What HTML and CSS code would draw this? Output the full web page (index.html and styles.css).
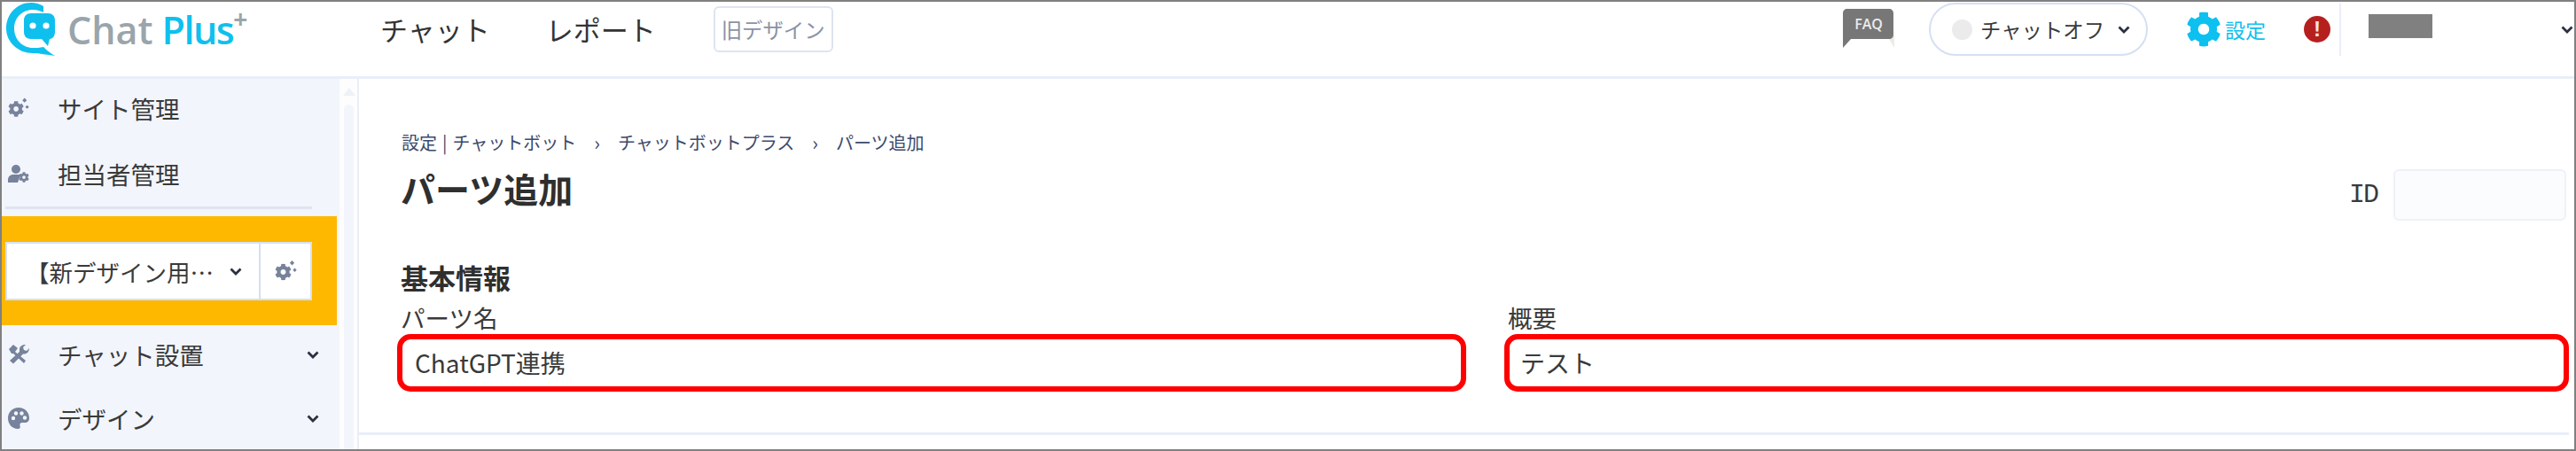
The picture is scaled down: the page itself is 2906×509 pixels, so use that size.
FILE: index.html
```html
<!DOCTYPE html>
<html lang="ja">
<head>
  <meta charset="UTF-8">
  <title>パーツ追加</title>
  <link rel="stylesheet" href="styles.css">
</head>
<body>
<svg class="defs" aria-hidden="true">
  <symbol id="cog" viewBox="0 0 512 512">
    <path d="M487.4 315.7l-42.6-24.6c4.3-23.2 4.3-47 0-70.2l42.6-24.6c4.9-2.8 7.1-8.6 5.5-14-11.1-35.6-30-67.8-54.7-94.6-3.8-4.1-10-5.1-14.8-2.3L380.8 110c-17.9-15.4-38.5-27.3-60.8-35.1V25.8c0-5.6-3.9-10.5-9.4-11.7-36.7-8.2-74.3-7.8-109.2 0-5.5 1.2-9.4 6.1-9.4 11.7V75c-22.2 7.9-42.8 19.8-60.8 35.1L88.7 85.5c-4.9-2.8-11-1.9-14.8 2.3-24.7 26.7-43.6 58.9-54.7 94.6-1.7 5.4.6 11.2 5.5 14L67.3 221c-4.3 23.2-4.3 47 0 70.2l-42.6 24.6c-4.9 2.8-7.1 8.6-5.5 14 11.1 35.6 30 67.8 54.7 94.6 3.8 4.1 10 5.1 14.8 2.3l42.6-24.6c17.9 15.4 38.5 27.3 60.8 35.1v49.2c0 5.6 3.9 10.5 9.4 11.7 36.7 8.2 74.3 7.8 109.2 0 5.5-1.2 9.4-6.1 9.4-11.7v-49.2c22.2-7.9 42.8-19.8 60.8-35.1l42.6 24.6c4.9 2.8 11 1.9 14.8-2.3 24.7-26.7 43.6-58.9 54.7-94.6 1.5-5.5-.7-11.3-5.6-14.1zM256 336c-44.1 0-80-35.9-80-80s35.9-80 80-80 80 35.9 80 80-35.9 80-80 80z"/>
  </symbol>
  <symbol id="sparkle-cog" viewBox="0 0 25 24">
    <use href="#cog" x="0" y="3.5" width="19" height="19"/>
    <path d="M19.5 0l2.6 2.8-2.6 2.8-2.6-2.8zM22.5 8.5l2.2 2.2-2.2 2.2-2.2-2.2z"/>
  </symbol>
  <symbol id="chev" viewBox="0 0 14 9">
    <path d="M1.5 1.5L7 7l5.5-5.5" fill="none" stroke="currentColor" stroke-width="2.8"/>
  </symbol>
</svg>

<div class="frame">
  <header class="topbar">
    <a class="logo">
      <svg class="logo-mark" viewBox="0 0 56 60">
        <path fill="#0fc0ee" d="M42 4A28 28 0 0 0 28 0C12 0 0 13 0 29C0 45 14 57 30 57C38 57 46 59 55 60C48 56 44 52 42 50C38 51 34 51 30 51C18 51 9 41 9 29C9 17 18 8 30 8C34 8 38 9 42 11Z"/>
        <path fill="#0fc0ee" d="M28 12H47C52 12 55 15 55 20V33C55 38 52 41 49 41L47 49L40 41H28C23 41 20 38 20 33V20C20 15 23 12 28 12Z"/>
        <circle cx="30" cy="26" r="3.6" fill="#fff"/>
        <circle cx="45" cy="26" r="3.6" fill="#fff"/>
      </svg>
      <span class="logo-chat">Chat</span>
      <span class="logo-plus">Plus</span>
      <span class="logo-sup">+</span>
    </a>
    <nav class="topnav">
      <a>チャット</a>
      <a>レポート</a>
    </nav>
    <a class="old-design">旧デザイン</a>

    <div class="top-right">
      <svg class="faq" viewBox="0 0 58 44">
        <path fill="#ecece6" d="M6 30H58V44L52 34H6Z"/>
        <path fill="#777" d="M5 0H52C55 0 57 2 57 5V29C57 32 55 34 52 34H9L0 44V5C0 2 2 0 5 0Z"/>
        <text x="29" y="23" text-anchor="middle" class="faq-text">FAQ</text>
      </svg>
      <div class="chat-toggle">
        <span class="dot"></span>
        <span class="toggle-label">チャットオフ</span>
        <svg class="chev"><use href="#chev"/></svg>
      </div>
      <a class="settings">
        <svg class="settings-cog"><use href="#cog"/></svg>
        <span>設定</span>
      </a>
      <span class="alert">!</span>
      <div class="user">
        <span class="user-name"></span>
        <svg class="chev"><use href="#chev"/></svg>
      </div>
    </div>
  </header>

  <div class="body">
    <aside class="sidebar">
      <a class="side-item">
        <svg class="side-icon"><use href="#sparkle-cog"/></svg>
        <span>サイト管理</span>
      </a>
      <a class="side-item second">
        <svg class="side-icon" viewBox="0 0 24 20">
          <circle cx="9" cy="5" r="5"/>
          <path d="M0 20V17C0 13 3 11 6 11H12C13 11 14 11.5 14 12L11 20Z"/>
          <use href="#cog" x="12" y="8" width="12" height="12"/>
        </svg>
        <span>担当者管理</span>
      </a>
      <hr class="side-rule">
      <div class="site-pick">
        <div class="site-select">
          <span class="site-name">【新デザイン用…</span>
          <svg class="chev"><use href="#chev"/></svg>
          <span class="site-cog"><svg><use href="#sparkle-cog"/></svg></span>
        </div>
      </div>
      <a class="side-item">
        <svg class="side-icon" viewBox="0 0 24 22">
          <path d="M1 5L6 0L11 4L8 8L20 18L18 21L6 10L4 10Z"/>
          <path d="M13 5C13 2 16 0 20 0L17 3L18 6L21 7L24 4C24 8 21 11 17 10.5L6 21.5L2 18L13 8Z"/>
        </svg>
        <span>チャット設置</span>
        <svg class="chev push"><use href="#chev"/></svg>
      </a>
      <a class="side-item last">
        <svg class="side-icon" viewBox="0 0 24 24">
          <path d="M12 0C5 0 0 5 0 12C0 19 5 24 11 24C14 24 14 22 13.5 20.5C13 18.5 14 17 16 17H19C22 17 24 15 24 12C24 5 19 0 12 0Z"/>
          <circle cx="6" cy="12" r="2.2" class="hole"/>
          <circle cx="9" cy="6.5" r="2.2" class="hole"/>
          <circle cx="15.5" cy="6.5" r="2.2" class="hole"/>
          <circle cx="19" cy="11.5" r="2.2" class="hole"/>
        </svg>
        <span>デザイン</span>
        <svg class="chev push"><use href="#chev"/></svg>
      </a>
    </aside>

    <div class="scrollbar">
      <span class="scroll-up"></span>
      <span class="scroll-thumb"></span>
    </div>

    <main class="main">
      <div class="crumbs">
        <span>設定</span>
        <span class="crumb-bar">|</span>
        <span>チャットボット</span>
        <span class="crumb-sep">›</span>
        <span>チャットボットプラス</span>
        <span class="crumb-sep">›</span>
        <span>パーツ追加</span>
      </div>
      <div class="title-row">
        <h1>パーツ追加</h1>
        <div class="id-group">
          <label>ID</label>
          <span class="id-box"></span>
        </div>
      </div>
      <h2>基本情報</h2>
      <div class="fields">
        <div>
          <label class="field-label">パーツ名</label>
          <div class="field-box">ChatGPT連携</div>
        </div>
        <div>
          <label class="field-label">概要</label>
          <div class="field-box short">テスト</div>
        </div>
      </div>
      <div class="main-rule"></div>
    </main>
  </div>
</div>
</body>
</html>
```

FILE: styles.css
```css
* {
    box-sizing: border-box;
}

body {
    margin: 0;
    background: #fff;
    color: #3a3a3a;
    font-family: "Noto Sans CJK JP", "Noto Sans", sans-serif;
}

.defs {
    display: none;
}

.frame {
    width: 2906px;
    height: 509px;
    border: 2px solid #808080;
    overflow: hidden;
    background: #fff;
}

.chev {
    width: 14px;
    height: 9px;
    color: #2b3040;
    flex: none;
}

/* top bar */
.topbar {
    display: flex;
    align-items: center;
    height: 87px;
    padding: 0 1px 22px 5px;
    border-bottom: 3px solid #e9eef8;
}

.logo {
    display: flex;
    align-items: center;
    width: 422px;
    font-family: "Open Sans", sans-serif;
    font-weight: 600;
    font-size: 43px;
}

.logo-mark {
    width: 56px;
    height: 60px;
    flex: none;
    margin-right: 13px;
}

.logo-chat {
    color: #9aa5ab;
    margin-right: 10px;
}

.logo-plus {
    color: #0fc0ee;
    letter-spacing: -1.5px;
}

.logo-sup {
    color: #9aa5ab;
    font-size: 28px;
    font-weight: 700;
    line-height: 28px;
    align-self: flex-start;
    margin-top: 4px;
}

.topnav {
    display: flex;
    gap: 63px;
    font-size: 31px;
    line-height: 40px;
    color: #333;
}

.old-design {
    display: flex;
    align-items: center;
    height: 52px;
    margin-left: 65px;
    padding: 0 7px;
    font-size: 23.4px;
    color: #8a93a6;
    border: 2px solid #dde4f2;
    border-radius: 6px;
}

.top-right {
    display: flex;
    align-items: center;
    margin-left: auto;
}

.faq {
    width: 58px;
    height: 44px;
    margin-top: -2px;
}

.faq-text {
    font-family: "Open Sans", sans-serif;
    font-size: 16px;
    font-weight: 600;
    fill: #ebebeb;
}

.chat-toggle {
    display: flex;
    align-items: center;
    width: 247px;
    height: 60px;
    margin-left: 39px;
    padding-left: 24px;
    border: 2px solid #d5e0f3;
    border-radius: 30px;
}

.dot {
    width: 23px;
    height: 23px;
    flex: none;
    border-radius: 50%;
    background: #ebebeb;
}

.toggle-label {
    margin: 0 15px 0 9px;
    font-size: 23.4px;
    line-height: 36px;
    white-space: nowrap;
    color: #3a3a3a;
}

.settings {
    display: flex;
    align-items: center;
    gap: 4px;
    margin-left: 43px;
    font-size: 23px;
    color: #0fc0ee;
}

.settings-cog {
    width: 40px;
    height: 40px;
    fill: #0dc0f0;
}

.alert {
    width: 30px;
    height: 30px;
    margin-left: 43px;
    border-radius: 50%;
    background: #b5201f;
    color: #f4e4e4;
    font-family: "Liberation Sans", sans-serif;
    font-size: 24px;
    font-weight: 700;
    line-height: 30px;
    text-align: center;
}

.user {
    display: flex;
    align-items: center;
    height: 59px;
    margin-left: 10px;
    padding-left: 31px;
    border-left: 2px solid #e9eef8;
}

.user-name {
    width: 72px;
    height: 27px;
    margin-right: 145px;
    margin-top: -7px;
    background: #808080;
}

/* sidebar */
.body {
    display: flex;
    height: 418px;
}

.sidebar {
    width: 378px;
    flex: none;
    background: #f2f5fb;
    font-size: 27.5px;
    color: #3a3a3a;
}

.side-item {
    display: flex;
    align-items: center;
    height: 66px;
    padding: 0 20px 0 7px;
}

.side-item.second {
    margin-top: 8px;
}

.side-item.last {
    margin-top: 6px;
}

.side-icon {
    width: 24px;
    height: 24px;
    margin-right: 32px;
    flex: none;
    fill: #77829c;
}

.side-icon .hole {
    fill: #f2f5fb;
}

.side-rule {
    height: 3px;
    width: 346px;
    margin: 4px 0 8px 4px;
    border: 0;
    background: #dfe4f0;
}

.site-pick {
    height: 123px;
    padding: 29px 0 0 4px;
    background: #ffb800;
}

.site-select {
    display: flex;
    align-items: center;
    width: 346px;
    height: 66px;
    background: #fff;
    border: 2px solid #d5e0f3;
}

.site-name {
    width: 230px;
    margin-left: 21px;
    font-size: 26.5px;
    white-space: nowrap;
}

.site-cog {
    display: flex;
    align-items: center;
    justify-content: center;
    height: 100%;
    margin-left: 19px;
    flex: 1;
    border-left: 2px solid #d5e0f3;
}

.site-cog svg {
    width: 25px;
    height: 24px;
    fill: #77829c;
}

.push {
    margin-left: auto;
}

/* fake scrollbar */
.scrollbar {
    display: flex;
    flex-direction: column;
    width: 25px;
    flex: none;
    padding: 10px 0 0 5px;
    border-left: 3px solid #f2f5fb;
    border-right: 2px solid #e9eef8;
    background: #fdfdfe;
}

.scroll-up {
    width: 0;
    height: 0;
    margin-left: -1px;
    border: 7px solid transparent;
    border-top: 0;
    border-bottom: 9px solid #eef1f8;
}

.scroll-thumb {
    width: 11px;
    flex: 1;
    margin-top: 10px;
    border-radius: 6px 6px 0 0;
    background: #f2f5fb;
}

/* main area */
.main {
    flex: 1;
    padding: 56px 6px 0 0;
}

.crumbs {
    display: flex;
    align-items: center;
    height: 30px;
    margin-left: 48px;
    font-size: 20px;
    color: #3d4a6b;
}

.crumb-bar {
    margin: 0 6px;
}

.crumb-sep {
    margin: 0 20px;
    font-size: 22px;
}

.title-row {
    display: flex;
    justify-content: space-between;
    height: 62px;
    margin: 12px 3px 0 47px;
}

h1 {
    margin: 0;
    font-size: 39px;
    line-height: 50px;
    font-weight: 700;
    color: #2f2f2f;
}

.id-group {
    display: flex;
    align-items: center;
    gap: 18px;
    align-self: flex-end;
    font-family: "Liberation Mono", monospace;
    font-size: 30px;
    letter-spacing: -2px;
}

.id-box {
    width: 195px;
    height: 58px;
    border: 2px solid #eef2f8;
    border-radius: 6px;
    background: #fbfcfd;
}

h2 {
    margin: 44px 0 0 47px;
    font-size: 31px;
    line-height: 40px;
    font-weight: 700;
    color: #2f2f2f;
}

.fields {
    display: grid;
    grid-template-columns: 1206px 1fr;
    gap: 43px;
    margin: 7px 0 0 43px;
}

.field-label {
    display: block;
    margin-left: 4px;
    margin-bottom: 1px;
    font-size: 27.5px;
    line-height: 36px;
}

.field-box {
    height: 65px;
    padding-left: 14px;
    border: 6px solid #ff0000;
    border-radius: 15px;
    font-size: 28px;
    line-height: 52px;
}

.field-box.short {
    padding-left: 12px;
}

.main-rule {
    height: 3px;
    margin-top: 46px;
    background: #e9eef8;
}
```
